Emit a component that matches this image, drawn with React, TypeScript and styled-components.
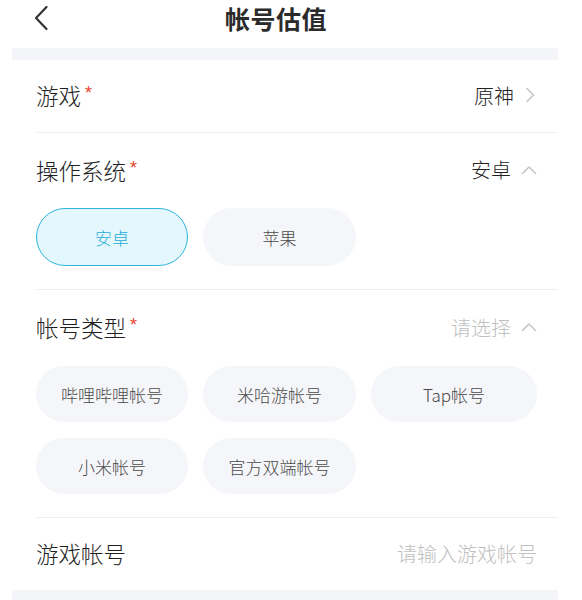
import React, { useState } from 'react';
import styled, { createGlobalStyle } from 'styled-components';

const GlobalStyle = createGlobalStyle`
  html, body {
    margin: 0;
    padding: 0;
    background: #ffffff;
    font-family: "Noto Sans CJK SC", "Noto Sans", "Liberation Sans", sans-serif;
    color: #333;
  }
  * { box-sizing: border-box; }
`;

const Page = styled.div`
  width: 582px;
  height: 600px;
  overflow: hidden;
  background: #fff;
`;

const Header = styled.header`
  height: 48px;
  width: 552px;
  display: grid;
  grid-template-columns: 1fr auto 1fr;
  align-items: center;
`;

const BackButton = styled.button`
  justify-self: start;
  margin-left: 30px;
  width: 22px;
  height: 30px;
  padding: 0;
  border: none;
  background: none;
  display: flex;
  align-items: center;
  justify-content: center;
  margin-top: -12px;
`;

const Title = styled.h1`
  margin: -12px 0 0 0;
  font-size: 25px;
  font-weight: 700;
  color: #2b2b2b;
  letter-spacing: 0.5px;
`;

const Body = styled.div`
  margin: 0 24px 0 12px;
  background: #f4f5f8;
  padding: 12px 0 10px;
`;

const Card = styled.div`
  background: #fff;
  padding-left: 24px;
`;

const Section = styled.div<{ $last?: boolean }>`
  border-bottom: ${p => (p.$last ? 'none' : '1px solid #eeeff2')};
  padding-right: 21px;
`;

const Row = styled.div<{ $h: number }>`
  height: ${p => p.$h}px;
  display: flex;
  align-items: center;
  justify-content: space-between;
  padding-bottom: 2px;
`;

const Label = styled.span`
  font-size: 22.5px;
  font-weight: 300;
  color: #1e1e1e;
  display: flex;
  align-items: center;
`;

const Star = styled.span`
  color: #e5432d;
  font-family: "Liberation Sans", sans-serif;
  font-size: 18px;
  margin-left: 4px;
  line-height: 1;
  position: relative;
  top: -2px;
`;

const Value = styled.span<{ $placeholder?: boolean }>`
  display: flex;
  align-items: center;
  gap: 10px;
  font-size: 20px;
  font-weight: 300;
  color: ${p => (p.$placeholder ? '#c0c0c0' : '#222')};
`;

const Chips = styled.div`
  display: grid;
  grid-template-columns: 152px 153px 166px;
  column-gap: 15px;
  row-gap: 16px;
  padding-bottom: 23px;
`;

const Chip = styled.button<{ $active?: boolean }>`
  height: ${p => (p.$active !== undefined ? 58 : 56)}px;
  border-radius: 29px;
  font-family: inherit;
  font-size: 17px;
  font-weight: 300;
  padding: 0;
  cursor: pointer;
  background: ${p => (p.$active ? '#e3f7fd' : '#f5f6f9')};
  border: ${p => (p.$active ? '1.5px solid #2db5df' : '1.5px solid #f5f6f9')};
  color: ${p => (p.$active ? '#28acd7' : '#4a4a4a')};
`;

const Input = styled.input`
  border: none;
  outline: none;
  text-align: right;
  font-family: inherit;
  font-size: 20px;
  font-weight: 300;
  color: #222;
  width: 260px;
  padding: 0;
  background: transparent;
  &::placeholder { color: #c0c0c0; }
`;

const Back = () => (
  <svg width="16" height="26" viewBox="0 0 16 26" fill="none">
    <path d="M13.5 2 L3 13 L13.5 24" stroke="#333" strokeWidth="2.2" strokeLinecap="round" strokeLinejoin="round" />
  </svg>
);

const ChevronRight = () => (
  <svg width="13" height="16" viewBox="0 0 13 16" fill="none">
    <path d="M3 1.5 L9.5 8 L3 14.5" stroke="#c6c6c6" strokeWidth="1.6" strokeLinecap="round" strokeLinejoin="round" />
  </svg>
);

const ChevronUp = () => (
  <svg width="16" height="10" viewBox="0 0 16 10" fill="none">
    <path d="M1.5 8.5 L8 2 L14.5 8.5" stroke="#c6c6c6" strokeWidth="1.6" strokeLinecap="round" strokeLinejoin="round" />
  </svg>
);

const osList = ['安卓', '苹果'];
const accountTypes = ['哔哩哔哩帐号', '米哈游帐号', 'Tap帐号', '小米帐号', '官方双端帐号'];

export default function App() {
  const [os, setOs] = useState('安卓');
  const [type, setType] = useState<string | null>(null);
  const [account, setAccount] = useState('');

  return (
    <Page>
      <GlobalStyle />
      <Header>
        <BackButton aria-label="返回">
          <Back />
        </BackButton>
        <Title>帐号估值</Title>
        <span />
      </Header>

      <Body>
        <Card>
          <Section>
            <Row $h={72}>
              <Label>游戏<Star>*</Star></Label>
              <Value>原神<ChevronRight /></Value>
            </Row>
          </Section>

          <Section>
            <Row $h={75}>
              <Label>操作系统<Star>*</Star></Label>
              <Value>{os}<ChevronUp /></Value>
            </Row>
            <Chips>
              {osList.map(o => (
                <Chip key={o} $active={o === os} onClick={() => setOs(o)}>{o}</Chip>
              ))}
            </Chips>
          </Section>

          <Section>
            <Row $h={76}>
              <Label>帐号类型<Star>*</Star></Label>
              <Value $placeholder={!type}>{type ?? '请选择'}<ChevronUp /></Value>
            </Row>
            <Chips>
              {accountTypes.map(t => (
                <Chip key={t} onClick={() => setType(t)}>{t}</Chip>
              ))}
            </Chips>
          </Section>

          <Section $last>
            <Row $h={72}>
              <Label>游戏帐号</Label>
              <Input
                type="text"
                value={account}
                onChange={e => setAccount(e.target.value)}
                placeholder="请输入游戏帐号"
              />
            </Row>
          </Section>
        </Card>
      </Body>
    </Page>
  );
}
